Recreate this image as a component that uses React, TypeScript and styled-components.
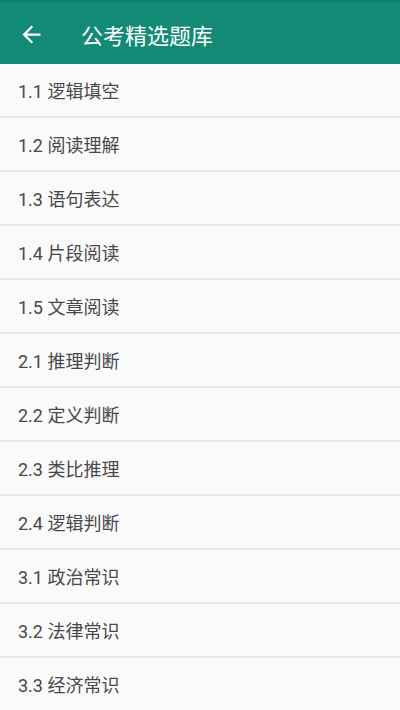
import React from "react";
import styled, { createGlobalStyle } from "styled-components";

const Global = createGlobalStyle`
  html, body { margin: 0; padding: 0; background: #fafafa; }
  body { font-family: Roboto, "Noto Sans CJK SC", sans-serif; }
`;

const Page = styled.div`
  width: 400px;
  height: 710px;
  overflow: hidden;
  background: #fafafa;
  display: flex;
  flex-direction: column;
`;

const Toolbar = styled.header`
  height: 64px;
  flex-shrink: 0;
  background: #138a76;
  border-top: 2px solid #0f7f6c;
  box-sizing: border-box;
  display: flex;
  align-items: center;
  padding-left: 18px;
`;

const BackButton = styled.button`
  width: 27px;
  height: 27px;
  padding: 0;
  border: none;
  background: none;
  display: flex;
  align-items: center;
  justify-content: center;
  margin-right: 36px;
  margin-top: 2px;
`;

const Title = styled.h1`
  margin: 0;
  color: #ffffff;
  font-size: 22px;
  font-weight: 400;
  font-family: Roboto, "Noto Sans CJK SC", sans-serif;
  letter-spacing: 0;
  margin-top: 2px;
`;

const List = styled.ul`
  list-style: none;
  margin: 0;
  padding: 0;
`;

const Row = styled.li`
  height: 52px;
  border-bottom: 2px solid #e8e8e8;
  display: flex;
  align-items: center;
  padding-left: 18px;
  font-size: 18px;
  color: #484848;
  font-family: Roboto, "Noto Sans CJK SC", sans-serif;
`;

const items = [
  "1.1 逻辑填空",
  "1.2 阅读理解",
  "1.3 语句表达",
  "1.4 片段阅读",
  "1.5 文章阅读",
  "2.1 推理判断",
  "2.2 定义判断",
  "2.3 类比推理",
  "2.4 逻辑判断",
  "3.1 政治常识",
  "3.2 法律常识",
  "3.3 经济常识",
];

export default function App() {
  return (
    <>
      <Global />
      <Page>
        <Toolbar>
          <BackButton aria-label="back">
            <svg width="27" height="27" viewBox="0 0 24 24">
              <path
                fill="#ffffff"
                d="M20 11H7.83l5.59-5.59L12 4l-8 8 8 8 1.41-1.41L7.83 13H20v-2z"
              />
            </svg>
          </BackButton>
          <Title>公考精选题库</Title>
        </Toolbar>
        <List>
          {items.map((t) => (
            <Row key={t}>{t}</Row>
          ))}
        </List>
      </Page>
    </>
  );
}
